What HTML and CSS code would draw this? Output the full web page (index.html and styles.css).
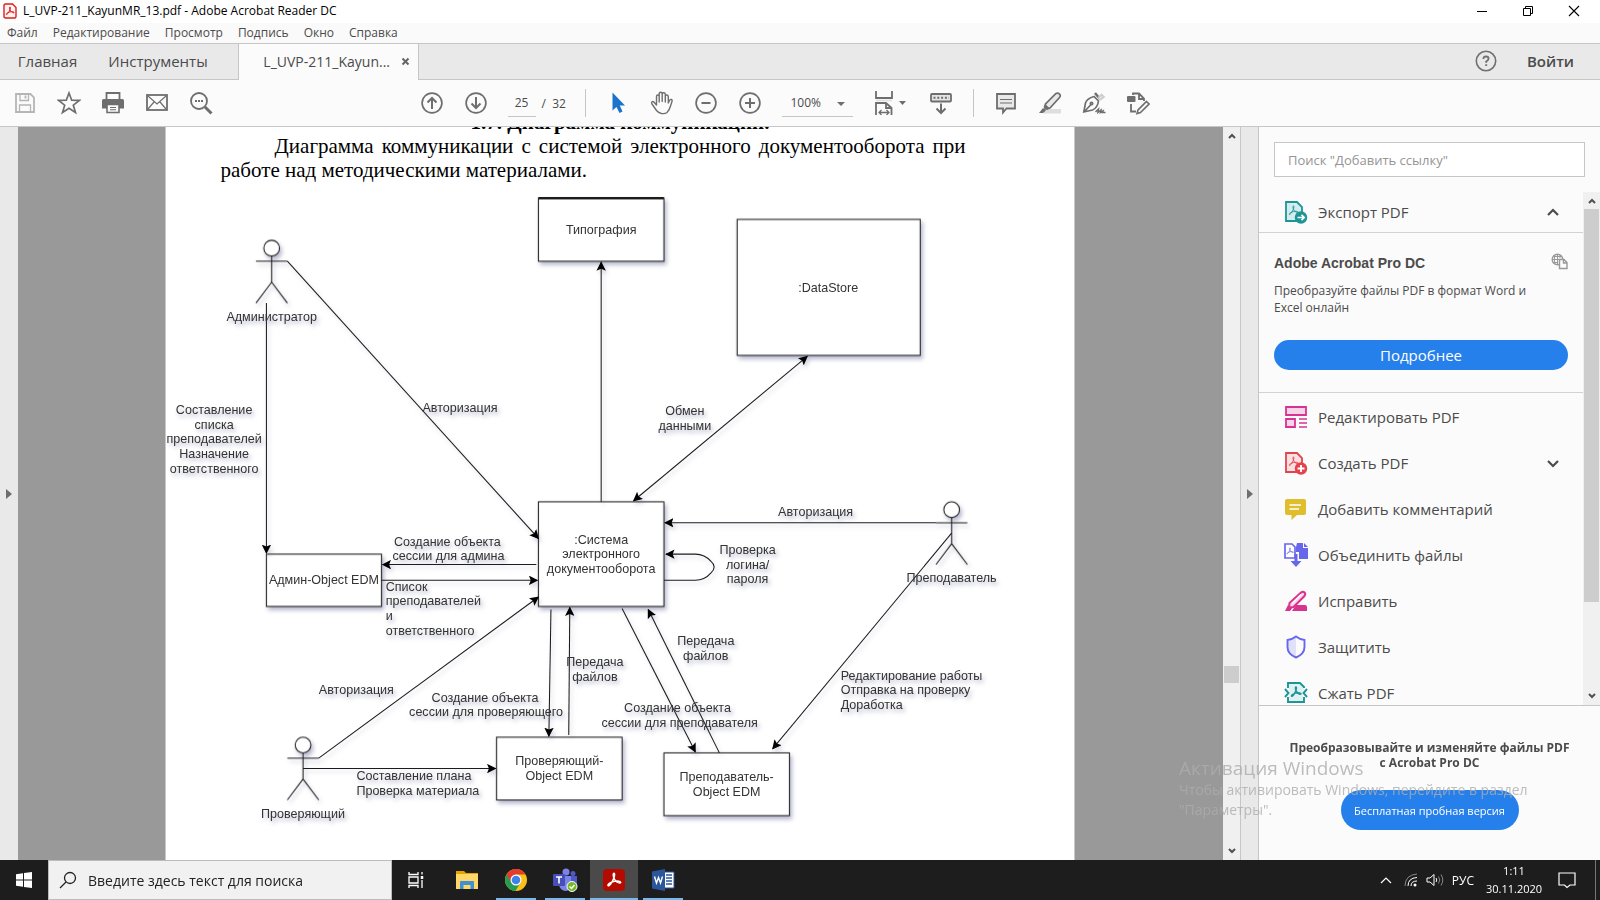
FILE: index.html
```html
<!DOCTYPE html>
<html lang="ru">
<head>
<meta charset="utf-8">
<title>L_UVP-211_KayunMR_13.pdf - Adobe Acrobat Reader DC</title>
<link rel="stylesheet" href="styles.css">
</head>
<body>
<svg class="defs" width="0" height="0" aria-hidden="true">
  <symbol id="pdf-mark" viewBox="0 0 12 12"><path d="M6 1c-.9 0-.7 2 0 3.700C7 6.600 8.500 8.300 10.300 8.300c1.200 0 .9-1.200-.7-1.400C7.200 6.600 4.500 7.300 2.700 8.300 1 9.300 1.200 10.700 2.100 10.300 3.600 9.600 6.500 4.500 6.500 2 6.500 1.400 6.300 1 6 1z"/></symbol>
</svg>

<header class="titlebar">
  <svg class="app-icon" width="14" height="16" viewBox="0 0 14 16"><path d="M2.500 1H9.500L13 4.500V13.500Q13 15 11.500 15H2.500Q1 15 1 13.500V2.500Q1 1 2.500 1z" fill="#fff4f3" stroke="#d9201c" stroke-width="1.400"/><use href="#pdf-mark" x="2" y="3" width="10" height="10" fill="none" stroke="#d9201c" stroke-width="1.200"/></svg>
  <span class="title">L_UVP-211_KayunMR_13.pdf - Adobe Acrobat Reader DC</span>
  <div class="window-buttons">
    <button aria-label="Свернуть"><svg width="12" height="12" viewBox="0 0 12 12"><path d="M1 6.500H11" stroke="#000"/></svg></button>
    <button aria-label="Восстановить"><svg width="12" height="12" viewBox="0 0 12 12"><path d="M1.500 3.500H8.500V10.500H1.500zM3.500 3.500V1.500H10.500V8.500H8.500" fill="none" stroke="#000"/></svg></button>
    <button aria-label="Закрыть"><svg width="12" height="12" viewBox="0 0 12 12"><path d="M1 1L11 11M11 1L1 11" stroke="#000" stroke-width="1.100"/></svg></button>
  </div>
</header>

<nav class="menubar">
  <button>Файл</button><button>Редактирование</button><button>Просмотр</button><button>Подпись</button><button>Окно</button><button>Справка</button>
</nav>

<div class="tabs">
  <button class="tab home">Главная</button>
  <button class="tab tools">Инструменты</button>
  <div class="tab document-tab"><span>L_UVP-211_Kayun...</span><button aria-label="Закрыть вкладку"><svg width="9" height="9" viewBox="0 0 9 9"><path d="M1.500 1.500L7.500 7.500M7.500 1.500L1.500 7.500" stroke="#666" stroke-width="2"/></svg></button></div>
  <button class="help" aria-label="Справка"><svg width="22" height="22" viewBox="0 0 22 22"><circle cx="11" cy="11" r="9.700" fill="none" stroke="#707070" stroke-width="1.600"/><path d="M8.500 9Q8.300 6.500 11 6.500T13.500 8.700Q13.500 10 11.200 11.500V12.700M11.200 14.200V16" fill="none" stroke="#707070" stroke-width="1.900"/></svg></button>
  <button class="sign-in">Войти</button>
</div>

<div class="toolbar">
  <div class="tool-group file-tools">
    <button aria-label="Сохранить"><svg width="24" height="24" viewBox="0 0 24 24" fill="none" stroke="#b5b5b5" stroke-width="1.800"><path d="M3 3H17.500L21 6.500V21H3z"/><path d="M7 3V9.500H15.500V3M6.500 21V14H17.500V21" stroke-width="1.300"/><path d="M12.500 4.500V7.500"/></svg></button>
    <button aria-label="Добавить в избранное"><svg width="24" height="24" viewBox="0 0 24 24"><path d="M12 2L14.700 9.200L22.300 9.400L16.300 14.200L18.500 21.500L12 17.300L5.500 21.500L7.700 14.200L1.700 9.400L9.300 9.200z" fill="none" stroke="#6e6e6e" stroke-width="1.700"/></svg></button>
    <button aria-label="Печать"><svg width="24" height="24" viewBox="0 0 24 24"><path d="M5.500 8V2H18.500V8" fill="#fbfbfb" stroke="#6e6e6e" stroke-width="1.800"/><path d="M2.500 8H21.500Q23 8 23 9.500V17.500H1V9.500Q1 8 2.500 8z" fill="#6e6e6e"/><path d="M6 13.500H18V21.500H6z" fill="#fbfbfb" stroke="#6e6e6e" stroke-width="1.600"/><path d="M9 16.500H15M9 18.800H15" stroke="#6e6e6e" stroke-width="1.100"/></svg></button>
    <button aria-label="Отправить по почте"><svg width="24" height="24" viewBox="0 0 24 24" fill="none" stroke="#6e6e6e"><rect x="2" y="4" width="20" height="15" stroke-width="1.800"/><path d="M3 5L12 13L21 5M3 18L9 11M21 18L15 11" stroke-width="1.200"/></svg></button>
    <button aria-label="Найти"><svg width="24" height="24" viewBox="0 0 24 24" fill="none" stroke="#6e6e6e"><circle cx="10" cy="10" r="8" stroke-width="1.800"/><path d="M16 16L22.500 22.500" stroke-width="3"/><path d="M6 10H14.500" stroke-width="2" stroke-dasharray="2 1"/></svg></button>
  </div>
  <div class="tool-group page-tools">
    <button aria-label="Предыдущая страница"><svg width="24" height="24" viewBox="0 0 24 24" fill="none" stroke="#6e6e6e"><circle cx="12" cy="12" r="9.900" stroke-width="1.700"/><path d="M12 18V7M7.500 11.500L12 7L16.500 11.500" stroke-width="2"/></svg></button>
    <button aria-label="Следующая страница"><svg width="24" height="24" viewBox="0 0 24 24" fill="none" stroke="#6e6e6e"><circle cx="12" cy="12" r="9.900" stroke-width="1.700"/><path d="M12 6V17M7.500 12.500L12 17L16.500 12.500" stroke-width="2"/></svg></button>
    <input class="page-number" type="text" value="25" aria-label="Номер страницы">
    <span class="page-total">/&nbsp; 32</span>
    <span class="divider"></span>
    <button aria-label="Выделение"><svg width="24" height="24" viewBox="0 0 24 24"><path d="M6.500 1.500V19.500L10.500 16L13.500 22L16.500 20.500L13.800 14.500H19z" fill="#1b74cc"/></svg></button>
    <button aria-label="Рука"><svg width="24" height="24" viewBox="0 0 24 24" fill="none" stroke="#6e6e6e" stroke-width="1.400" stroke-linecap="round" stroke-linejoin="round"><path d="M6.500 14V5.500Q6.500 4 7.800 4T9.200 5.500V11V3Q9.200 1.300 10.700 1.300T12.200 3V10.500V3Q12.200 1.800 13.700 1.800T15.300 3.300V11V5.500Q15.300 4 16.700 4T18.300 5.500V12L19.500 9.500Q20.200 8 21.400 8.500T22 10.500L20.500 15Q19.300 19.500 17 21.500Q15 23 11.500 22.500Q8.500 22 6.500 19.500L2 13Q1 11.500 2 10.800T4.300 11.500z"/></svg></button>
    <button aria-label="Уменьшить"><svg width="24" height="24" viewBox="0 0 24 24" fill="none" stroke="#6e6e6e"><circle cx="12" cy="12" r="9.900" stroke-width="1.700"/><path d="M7.500 12H16.500" stroke-width="2"/></svg></button>
    <button aria-label="Увеличить"><svg width="24" height="24" viewBox="0 0 24 24" fill="none" stroke="#6e6e6e"><circle cx="12" cy="12" r="9.900" stroke-width="1.700"/><path d="M7 12H17M12 7V17" stroke-width="2"/></svg></button>
    <span class="zoom-box"><select aria-label="Масштаб"><option>100%</option></select><svg width="8" height="4" viewBox="0 0 8 4"><path d="M0 0H8L4 4z" fill="#6e6e6e"/></svg></span>
    <button class="fit" aria-label="По ширине"><svg width="36" height="24" viewBox="0 0 36 24" fill="none" stroke="#6e6e6e" stroke-width="1.800"><path d="M4 0V7H20V0M4 24V12H14L19.500 17V24M14 12V17H19.500"/><path d="M4 9.500H20" stroke="#ddd" stroke-width="1.500"/><path d="M7.500 21.500H17M9.500 19L7 21.500L9.500 24M14.500 19L17 21.500L14.500 24" stroke-width="1.300"/><path d="M27 10H34L30.500 14z" fill="#6e6e6e" stroke="none"/></svg></button>
    <button aria-label="Прокрутка"><svg width="24" height="24" viewBox="0 0 24 24" fill="none" stroke="#6e6e6e" stroke-width="1.800"><rect x="2" y="3" width="20" height="7.500" rx="1" fill="#e4e4e4"/><path d="M4.500 6.700H20" stroke-width="2" stroke-dasharray="2 1.800"/><path d="M12 12.500V21.500M7.500 17.500L12 22L16.500 17.500" stroke-width="2"/></svg></button>
    <span class="divider"></span>
    <button aria-label="Комментарий"><svg width="24" height="24" viewBox="0 0 24 24"><path d="M3 3H21V17.500H12.500L9 21.500V17.500H3z" fill="#e8e8e8" stroke="#6e6e6e" stroke-width="1.800"/><path d="M6 8.500H18M6 12H18" stroke="#6e6e6e" stroke-width="1.200"/></svg></button>
    <button aria-label="Маркер"><svg width="24" height="24" viewBox="0 0 24 24"><path d="M9 18H23V22.500H5z" fill="#dedede"/><path d="M18 2.500Q20 1.500 21.500 3T21.500 6.500L12 17L7 18L7.500 13z" fill="#e8e8e8" stroke="#6e6e6e" stroke-width="1.700"/><path d="M7 13L12 17.500L9 19L5.500 16zM5 17L8 19.500L5 22H1z" fill="#6e6e6e"/></svg></button>
    <button aria-label="Подписать"><svg width="24" height="24" viewBox="0 0 24 24" fill="none" stroke="#6e6e6e" stroke-width="1.700"><path d="M13 2L18 8" stroke-width="2.500"/><path d="M16 7L19.500 3.500L22 6L18 9" fill="#ddd" stroke="#ccc"/><path d="M12 5.500Q5 7.500 3.500 12L1.800 21L10.500 19Q15.500 17 16.500 10zM2.500 20.500L9 13.500"/><circle cx="9.500" cy="12.500" r="1.200"/><path d="M13.500 21L16.500 18L16 21.500L19 19L18.500 21.500L21 20L20.500 21.500H23.500" stroke-width="1.500"/></svg></button>
    <button aria-label="Дополнительные инструменты"><svg width="24" height="24" viewBox="0 0 24 24" fill="none" stroke="#6e6e6e" stroke-width="1.800"><rect x="1" y="5" width="8.500" height="6" rx="1" fill="#6e6e6e" stroke="none"/><path d="M7 4V2.500H13L18 7.500V10M13 3V8H18M5 13V20.500H10"/><path d="M20.500 10.500L23 13L14.500 21.500L11 22.500L12 19z" fill="#fbfbfb" stroke-width="1.600"/></svg></button>
  </div>
</div>

<main class="workspace">
  <button class="side-handle" aria-label="Показать панель навигации"><svg width="6" height="10" viewBox="0 0 6 10"><path d="M0 0L6 5L0 10z" fill="#6e6e6e"/></svg></button>
  <section class="viewport">
    <article class="sheet">
      <div class="sheet-text">
        <div class="cut-line"><h2>1.7. Диаграмма коммуникации.</h2></div>
        <p>Диаграмма коммуникации с системой электронного документооборота при работе над методическими материалами.</p>
      </div>
      <svg class="diagram" viewBox="4 0 868 643" role="img" aria-label="Диаграмма коммуникации">
        <defs>
          <marker id="arrow" viewBox="0 0 10 10" refX="9" refY="5" markerWidth="9" markerHeight="9" markerUnits="userSpaceOnUse" orient="auto-start-reverse"><path d="M0 0L10 5L0 10L2 5z"/></marker>
          <symbol id="actor" viewBox="-2 -2 36 66"><circle cx="15" cy="7.500" r="7.500" fill="#fff"/><path d="M15 15V40M0 20H30M15 40L0 60M15 40L30 60" fill="none"/></symbol>
        </defs>
        <g class="shapes">
          <rect x="360" y="10" width="120" height="60"/><path d="M360 10H480" stroke-width="2"/>
          <rect x="550" y="30" width="175" height="130"/>
          <rect x="360" y="300" width="120" height="100"/>
          <rect x="100" y="350" width="110" height="50"/>
          <rect x="320" y="525" width="120" height="60"/>
          <rect x="480" y="540" width="120" height="60"/>
          <use href="#actor" x="88" y="48" width="36" height="66"/>
          <use href="#actor" x="738" y="298" width="36" height="66"/>
          <use href="#actor" x="118" y="523" width="36" height="66"/>
        </g>
        <g class="links">
          <path d="M100 110V349" marker-end="url(#arrow)"/>
          <path d="M120 70L360 335" marker-end="url(#arrow)"/>
          <path d="M420 300V71" marker-end="url(#arrow)"/>
          <path d="M451 299L617 161" marker-start="url(#arrow)" marker-end="url(#arrow)"/>
          <path d="M740 320H481" marker-end="url(#arrow)"/>
          <path d="M755 330L584 536" marker-end="url(#arrow)"/>
          <path d="M480 375H510Q519 375 525 368Q531 362 525 357Q519 350 510 350H482" marker-end="url(#arrow)"/>
          <path d="M358 360H211" marker-end="url(#arrow)"/>
          <path d="M210 375H359" marker-end="url(#arrow)"/>
          <path d="M150 545L360 391" marker-end="url(#arrow)"/>
          <path d="M135 555H319" marker-end="url(#arrow)"/>
          <path d="M372 403L370 524" marker-end="url(#arrow)"/>
          <path d="M389 523L390 401" marker-end="url(#arrow)"/>
          <path d="M440 402L510 539" marker-end="url(#arrow)"/>
          <path d="M533 540L465 403" marker-end="url(#arrow)"/>
        </g>
        <g class="box-text">
          <text x="420" y="44">Типография</text>
          <text x="637" y="99">:DataStore</text>
          <text x="420" y="340">:Система<tspan x="420" dy="14">электронного</tspan><tspan x="420" dy="14">документооборота</tspan></text>
          <text x="155" y="379">Админ-Object EDM</text>
          <text x="380" y="552">Проверяющий-<tspan x="380" dy="14">Object EDM</tspan></text>
          <text x="540" y="567">Преподаватель-<tspan x="540" dy="14">Object EDM</tspan></text>
        </g>
        <g class="labels">
          <text x="105" y="127">Администратор</text>
          <text x="755" y="377">Преподаватель</text>
          <text x="135" y="602">Проверяющий</text>
          <text x="50" y="216">Составление<tspan x="50" dy="14">списка</tspan><tspan x="50" dy="14">преподавателей</tspan><tspan x="50" dy="14">Назначение</tspan><tspan x="50" dy="14">ответственного</tspan></text>
          <text x="285" y="214">Авторизация</text>
          <text x="500" y="217">Обмен<tspan x="500" dy="14">данными</tspan></text>
          <text x="625" y="314">Авторизация</text>
          <text x="560" y="350">Проверка<tspan x="560" dy="14">логина/</tspan><tspan x="560" dy="14">пароля</tspan></text>
          <text x="273" y="342">Создание объекта<tspan x="274" dy="14">сессии для админа</tspan></text>
          <text class="left" x="214" y="385">Список<tspan x="214" dy="14">преподавателей</tspan><tspan x="214" dy="14">и</tspan><tspan x="214" dy="14">ответственного</tspan></text>
          <text x="186" y="484">Авторизация</text>
          <text x="309" y="491">Создание объекта<tspan x="310" dy="14">сессии для проверяющего</tspan></text>
          <text x="414" y="457">Передача<tspan x="414" dy="14">файлов</tspan></text>
          <text x="520" y="437">Передача<tspan x="520" dy="14">файлов</tspan></text>
          <text class="left" x="186" y="566">Составление плана<tspan x="186" dy="14">Проверка материала</tspan></text>
          <text x="493" y="501">Создание объекта<tspan x="495" dy="14">сессии для преподавателя</tspan></text>
          <text class="left" x="649" y="470">Редактирование работы<tspan x="649" dy="14">Отправка на проверку</tspan><tspan x="649" dy="14">Доработка</tspan></text>
        </g>
      </svg>
    </article>
  </section>
  <div class="scrollbar doc-scroll">
    <svg width="8" height="6" viewBox="0 0 8 6"><path d="M1 5L4 2L7 5" fill="none" stroke="#505050" stroke-width="2"/></svg>
    <div class="track"><span class="thumb"></span></div>
    <svg width="8" height="6" viewBox="0 0 8 6"><path d="M1 1L4 4L7 1" fill="none" stroke="#505050" stroke-width="2"/></svg>
  </div>
  <button class="side-handle right" aria-label="Скрыть панель инструментов"><svg width="6" height="10" viewBox="0 0 6 10"><path d="M0 0L6 5L0 10z" fill="#6e6e6e"/></svg></button>

  <aside class="panel">
    <input class="panel-search" type="search" placeholder="Поиск &quot;Добавить ссылку&quot;" aria-label="Поиск инструментов">
    <div class="panel-body">
      <div class="panel-list">
        <button class="tool-row export"><svg class="tool-icon" width="24" height="24" viewBox="0 0 24 24"><path d="M2 2H13L18 7V21H2z" fill="#d3eced" stroke="#1d9597" stroke-width="1.800"/><use href="#pdf-mark" x="4" y="5" width="11" height="11" fill="none" stroke="#1d9597"/><circle cx="17" cy="17.500" r="6.200" fill="#1d9597"/><path d="M13.500 17.500H20M17.500 14.800L20.200 17.500L17.500 20.200" fill="none" stroke="#fff" stroke-width="1.700"/></svg><span>Экспорт PDF</span><svg class="chevron" width="14" height="9" viewBox="0 0 14 9"><path d="M2 7L7 2L12 7" fill="none" stroke="#4b4b4b" stroke-width="2.200"/></svg></button>
        <div class="offer">
          <div class="offer-head"><h3>Adobe Acrobat Pro DC</h3><svg width="17" height="17" viewBox="0 0 17 17" fill="none" stroke="#999"><circle cx="6.500" cy="6.500" r="5.300" stroke-width="1.400"/><path d="M1 6.500H9M6.500 1V12M2 3.500H11M2 9.500H7M4 2Q2.500 6 4 11M9 2V5"/><path d="M8.500 6.500H13L16 9.500V15.500H8.500zM12.500 6.500V10H16" fill="#fbfbfb" stroke-width="1.400"/></svg></div>
          <p>Преобразуйте файлы PDF в формат Word и Excel онлайн</p>
          <button class="more">Подробнее</button>
        </div>
        <button class="tool-row"><svg class="tool-icon" width="24" height="24" viewBox="0 0 24 24" fill="#f7d4e7" stroke="#d8348f" stroke-width="1.800"><path d="M2 2H22V10H2zM2 14H11V22H2z"/><path d="M15 14H23M15 18H23M15 22H23" stroke-width="1.300"/></svg><span>Редактировать PDF</span></button>
        <button class="tool-row"><svg class="tool-icon" width="24" height="24" viewBox="0 0 24 24"><path d="M2 2H13L18 7V21H2z" fill="#fae0e0" stroke="#e2444d" stroke-width="1.800"/><use href="#pdf-mark" x="4" y="5" width="11" height="11" fill="none" stroke="#e2444d"/><circle cx="17" cy="17.500" r="6.200" fill="#e2444d"/><path d="M13.500 17.500H20.500M17 14V21" stroke="#fff" stroke-width="1.900"/></svg><span>Создать PDF</span><svg class="chevron" width="14" height="9" viewBox="0 0 14 9"><path d="M2 2L7 7L12 2" fill="none" stroke="#4b4b4b" stroke-width="2.200"/></svg></button>
        <button class="tool-row"><svg class="tool-icon" width="24" height="24" viewBox="0 0 24 24"><path d="M3 2H20Q22 2 22 4V16Q22 18 20 18H13L7.500 23V18H3Q1 18 1 16V4Q1 2 3 2z" fill="#dfbd2c"/><path d="M5.500 8H17M5.500 12H15" stroke="#fff" stroke-width="1.400"/></svg><span>Добавить комментарий</span></button>
        <button class="tool-row"><svg class="tool-icon" width="24" height="24" viewBox="0 0 24 24"><path d="M1 1H8L11 4V15H1z" fill="#fff" stroke="#6767ec" stroke-width="1.700"/><use href="#pdf-mark" x="2" y="4" width="8" height="8" fill="none" stroke="#6767ec"/><path d="M13 0H19V5H24V16H15V9H12V4zM20 0L24 4H20zM10.500 11H13.500V18H17.500L12 24L6.500 18H10.500z" fill="#6767ec"/></svg><span>Объединить файлы</span></button>
        <button class="tool-row"><svg class="tool-icon" width="24" height="24" viewBox="0 0 24 24"><path d="M12 16H21Q23 16 23 18V22H8z" fill="#d8348f"/><path d="M17 3.500Q19 2 20.500 3.500T20.500 7L9.500 18L5 18.500L5.500 14z" fill="#f7d4e7" stroke="#d8348f" stroke-width="2"/><path d="M8 14.500L17 5.500" stroke="#fff" stroke-width="1.300"/><path d="M4 16L8 19.500L6 22H1z" fill="#d8348f"/></svg><span>Исправить</span></button>
        <button class="tool-row"><svg class="tool-icon" width="24" height="24" viewBox="0 0 24 24"><path d="M12 1.500V22.500Q3.500 18.500 3.500 12V5Q8 4.500 12 1.500z" fill="#e0e0fa"/><path d="M12 1.500Q16 4.500 20.500 5V12Q20.500 19 12 22.500Q3.500 19 3.500 12V5Q8 4.500 12 1.500z" fill="none" stroke="#6767ec" stroke-width="1.900"/></svg><span>Защитить</span></button>
        <button class="tool-row"><svg class="tool-icon" width="24" height="24" viewBox="0 0 24 24" fill="none" stroke="#1d9597" stroke-width="1.900"><path d="M4 3H16L20 7L18 12L20 17V20H4L6 12z" fill="#dff1f1" stroke="none"/><path d="M4 7V2H16L20 6V7M4 16V21H20V16"/><path d="M1 8L4.500 12L1 16M23 8L19.500 12L23 16"/><use href="#pdf-mark" x="6" y="5" width="12" height="12" stroke-width="1.400"/></svg><span>Сжать PDF</span></button>
      </div>
      <div class="scrollbar panel-scroll">
        <svg width="8" height="6" viewBox="0 0 8 6"><path d="M1 5L4 2L7 5" fill="none" stroke="#505050" stroke-width="2"/></svg>
        <div class="track"><span class="thumb"></span></div>
        <svg width="8" height="6" viewBox="0 0 8 6"><path d="M1 1L4 4L7 1" fill="none" stroke="#505050" stroke-width="2"/></svg>
      </div>
    </div>
    <div class="promo">
      <p>Преобразовывайте и изменяйте файлы PDF с&nbsp;Acrobat Pro DC</p>
      <button>Бесплатная пробная версия</button>
    </div>
  </aside>
</main>

<footer class="taskbar">
  <button class="start" aria-label="Пуск"><svg width="16" height="16" viewBox="0 0 16 16"><path d="M0 2.200L7 1.200V7.500H0zM8 1L16 0V7.500H8zM0 8.500H7V14.800L0 13.800zM8 8.500H16V16L8 15z" fill="#fff"/></svg></button>
  <label class="task-search"><svg width="18" height="18" viewBox="0 0 18 18" fill="none" stroke="#222" stroke-width="1.300"><circle cx="11" cy="7" r="5.500"/><path d="M7 11L1 17"/></svg><input type="text" placeholder="Введите здесь текст для поиска" aria-label="Поиск в Windows"></label>
  <div class="apps">
    <button class="task-view" aria-label="Представление задач"><svg width="18" height="18" viewBox="0 0 18 18" fill="none" stroke="#fff" stroke-width="1.300"><path d="M2 1V3.500H11V1M2 17V14.500H11V17M2 6H11V12H2zM15 1V3.500M15 9V17"/><path d="M15 5V8" stroke-width="2.500"/></svg></button>
    <button aria-label="Проводник"><svg width="24" height="20" viewBox="0 0 24 20"><path d="M1 1H9L11 3H23V19H1z" fill="#e5a300"/><path d="M1 4H23V19H1z" fill="#ffd667"/><path d="M5 18V12Q5 11 6 11H18Q19 11 19 12V19H15.500V15H8.500V19H5z" fill="#3d92d6"/></svg></button>
    <button class="running" aria-label="Google Chrome"><svg width="24" height="24" viewBox="0 0 24 24"><circle cx="12" cy="12" r="11" fill="#fbc116"/><path d="M2.500 6.500A11 11 0 0 0 11.500 23L16.500 14.500L12 12z" fill="#269c4e"/><path d="M12 6.500H21.500A11 11 0 0 0 2.500 6.500L7.300 14.500z" fill="#e33b2e"/><circle cx="12" cy="12" r="5.500" fill="#fff"/><circle cx="12" cy="12" r="4.300" fill="#3e82ee"/></svg></button>
    <button class="running" aria-label="Microsoft Teams"><svg width="26" height="24" viewBox="0 0 26 24"><circle cx="14" cy="4" r="3.500" fill="#7b83eb"/><circle cx="21" cy="5.500" r="2.500" fill="#5059c9"/><path d="M15 8H25V16Q24 20 19 20z" fill="#5059c9"/><path d="M7 8H19V17Q18 23 13 23Q8 22 7 17z" fill="#7b83eb"/><rect x="1" y="6" width="12" height="12" rx="1" fill="#464eb8"/><path d="M4 9H10M7 9V15.500" stroke="#fff" stroke-width="1.600"/><circle cx="20" cy="18.500" r="5" fill="#76b82a" stroke="#fff"/><path d="M17.500 18.500L19.500 20.500L22.500 17" fill="none" stroke="#fff" stroke-width="1.500"/></svg></button>
    <button class="running active" aria-label="Adobe Acrobat"><svg width="22" height="22" viewBox="0 0 22 22"><rect width="22" height="22" rx="4" fill="#b30b00"/><use href="#pdf-mark" x="3" y="3" width="16" height="16" fill="none" stroke="#fff" stroke-width="1.100"/></svg></button>
    <button class="running" aria-label="Microsoft Word"><svg width="24" height="22" viewBox="0 0 24 22"><path d="M13 3H23V19H13z" fill="#fff" stroke="#2b579a"/><path d="M15 6H21M15 9H21M15 12H21M15 15H21" stroke="#2b579a" stroke-width="1.300"/><path d="M1 2.500L14 0V22L1 19.500z" fill="#2b579a"/><path d="M3.500 7.500L5.500 14L7.500 8.500L9.500 14L11.500 7.500" fill="none" stroke="#fff" stroke-width="1.400"/></svg></button>
  </div>
  <div class="tray">
    <button class="expand" aria-label="Скрытые значки"><svg width="12" height="8" viewBox="0 0 12 8"><path d="M1 7L6 2L11 7" fill="none" stroke="#fff" stroke-width="1.200"/></svg></button>
    <svg width="14" height="14" viewBox="0 0 14 14" fill="none" stroke="#fff"><path d="M1 13Q1 2 13 1" stroke="#888"/><path d="M4 13Q4 5 13 4.500M7 13Q7 8 13 8"/><circle cx="11" cy="12" r="1.500" fill="#fff" stroke="none"/></svg>
    <svg width="18" height="14" viewBox="0 0 18 14" fill="none" stroke="#fff"><path d="M1 5H4L8 1.500V12.500L4 9H1z"/><path d="M10 5Q11.500 7 10 9"/><path d="M12.500 3.500Q15 7 12.500 10.500M15 1.500Q18.500 7 15 12.500" stroke="#888"/></svg>
    <span class="language">РУС</span>
    <time><span>1:11</span><span>30.11.2020</span></time>
    <button class="notifications" aria-label="Уведомления"><svg width="18" height="17" viewBox="0 0 18 17"><path d="M1 1H17V13H12L9 15.500L6.500 13H1z" fill="none" stroke="#fff" stroke-width="1.200"/></svg></button>
  </div>
</footer>

<div class="activation">
  <strong>Активация Windows</strong>
  <span>Чтобы активировать Windows, перейдите в раздел</span>
  <span>"Параметры".</span>
</div>
</body>
</html>
```
FILE: styles.css
```css
* { box-sizing: border-box; }
html, body { height: 100%; }
body {
  margin: 0;
  display: flex;
  flex-direction: column;
  overflow: hidden;
  background: #fbfbfb;
  color: #4b4b4b;
  font: 12px "Open Sans", "Noto Sans", sans-serif;
}
button, input, select { font: inherit; color: inherit; border: 0; background: none; padding: 0; margin: 0; }
button { display: flex; align-items: center; justify-content: center; white-space: nowrap; }
h2, h3, p { margin: 0; }
svg { flex: none; display: block; }
.defs { position: absolute; }

.titlebar { flex: none; display: flex; align-items: center; height: 23px; padding: 0 0 2px 3px; background: #fff; color: #000; }
.title { margin-left: 6px; }
.window-buttons { display: flex; margin-left: auto; padding-right: 3px; }
.window-buttons button { width: 46px; height: 20px; }

.menubar { flex: none; display: flex; align-items: center; gap: 15px; height: 21px; padding: 0 0 1px 7px; border-bottom: 1px solid #c6c6c6; background: #fafafa; }

.tabs { flex: none; display: flex; align-items: stretch; height: 36px; background: #e9e9e9; font-size: 15px; box-shadow: inset 0 -1px #c6c6c6; }
.tab { display: flex; align-items: center; }
.tabs > * { padding-bottom: 2px; }
.home { width: 93px; padding-left: 2px; }
.tools { width: 130px; }
.document-tab { width: 181px; margin-left: 15px; padding-right: 8px; justify-content: flex-end; gap: 11px; background: #fbfbfb; border: solid #c6c6c6; border-width: 0 1px; font-size: 14px; }
.help { margin-left: auto; width: 22px; }
.sign-in { padding-right: 26px; padding-left: 30px; font-weight: 600; }

.toolbar { flex: none; display: grid; grid-template-columns: 1fr auto 1fr; align-items: center; height: 47px; padding: 0 34px 0 3px; border-bottom: 1px solid #c6c6c6; }
.tool-group { display: flex; align-items: center; }
.page-tools { grid-column: 2; }
.tool-group button { width: 44px; height: 28px; }
.page-number { width: 28px; height: 27px; margin-left: 10px; text-align: center; border-bottom: 1px solid #c6c6c6; }
.page-total { width: 39px; padding-left: 6px; white-space: nowrap; }
.divider { width: 1px; height: 28px; margin: 0 10px; background: #c6c6c6; }
.zoom-box { position: relative; width: 71px; height: 27px; margin: 0 8px 0 10px; border-bottom: 1px solid #c6c6c6; }
.zoom-box select { appearance: none; width: 100%; height: 100%; padding-left: 9px; }
.zoom-box svg { position: absolute; right: 8px; top: 12px; pointer-events: none; }
.tool-group .fit { width: 58px; }

.workspace { flex: 1; min-height: 0; display: flex; }
.side-handle { flex: none; width: 18px; background: #e9e9e9; }
.side-handle.right { width: 19px; border: solid #c6c6c6; border-width: 0 1px; }
.viewport { flex: 1; min-width: 0; overflow: hidden; background: #999; padding: 0 2px 0 0; }
.sheet { max-width: 910px; min-height: 100%; margin: 0 auto; background: #fff; border: solid #c8c8c8; border-width: 0 1px; }
.sheet-text { padding: 0 108px 0 55px; color: #000; font-family: "Liberation Serif", serif; font-size: 21px; line-height: 24px; }
.cut-line { display: flex; align-items: flex-end; justify-content: center; height: 7px; overflow: hidden; padding-left: 54px; }
.cut-line h2 { font-size: 21px; line-height: 24px; }
.sheet-text p { text-indent: 54px; text-align: justify; }
.diagram { width: 100%; margin-top: 6px; font-family: "Liberation Sans", Arial, sans-serif; font-size: 12px; }
.diagram text { fill: #333; text-anchor: middle; }
.diagram .left { text-anchor: start; }
.shapes { fill: #fff; stroke: #1c1c1c; filter: drop-shadow(2px 3px 2px rgba(70, 75, 130, .4)); }
.links { fill: none; stroke: #1c1c1c; filter: drop-shadow(2px 3px 2px rgba(70, 75, 130, .25)); }
.diagram marker path { fill: #000; stroke: none; }
.labels { filter: drop-shadow(2px 3px 2px rgba(70, 75, 130, .4)); }

.scrollbar { flex: none; display: flex; flex-direction: column; align-items: center; width: 17px; padding: 6px 0; background: #f0f0f0; }
.scrollbar .track { flex: 1; width: 100%; }
.thumb { display: block; width: 15px; margin: 0 auto; background: #cdcdcd; }
.doc-scroll .track { padding-top: 527px; }
.doc-scroll .thumb { height: 17px; }
.panel-scroll .track { padding-top: 5px; }
.panel-scroll .thumb { height: 393px; }

.panel { flex: none; width: 341px; display: flex; flex-direction: column; background: #fbfbfb; }
.panel-search { flex: none; height: 35px; margin: 15px; padding: 0 13px; background: #fff; border: 1px solid #c6c6c6; font-size: 13px; }
.panel-search::placeholder { color: #959595; }
.panel-body { flex: 1; min-height: 0; display: flex; border-bottom: 1px solid #c6c6c6; }
.panel-list { flex: 1; overflow: hidden; }
.tool-row { width: 100%; height: 46px; padding: 0 23px 0 25px; justify-content: flex-start; gap: 10px; font-size: 15px; }
.tool-row .chevron { margin-left: auto; }
.tool-row.export { height: 41px; border-bottom: 1px solid #d2d2d2; }
.offer { margin-bottom: 1px; padding: 20px 15px 22px; border-bottom: 1px solid #d2d2d2; }
.offer-head { display: flex; justify-content: space-between; }
.offer h3 { font: bold 14px/20px "Liberation Sans", Arial, sans-serif; }
.offer p { margin: 9px 0 24px; padding-right: 26px; line-height: 17px; font-size: 12px; }
.more { width: 100%; height: 30px; border-radius: 15px; background: #2680eb; color: #fff; font-size: 15px; }
.promo { flex: none; display: flex; flex-direction: column; align-items: center; height: 154px; padding: 34px 24px 0; }
.promo p { font-size: 12px; font-weight: 700; line-height: 15px; text-align: center; }
.promo button { width: 178px; height: 40px; margin-top: 20px; border-radius: 20px; background: #2680eb; color: #fff; font-size: 11px; }

.taskbar { flex: none; display: flex; height: 40px; background: #1d1d1d; color: #fff; }
.start { width: 48px; }
.task-search { display: flex; align-items: center; gap: 11px; width: 344px; padding-left: 10px; background: #f1f1f1; border: 1px solid #bbb; color: #222; font-size: 14px; }
.task-search input { flex: 1; }
.task-search input::placeholder { color: #222; }
.apps { display: flex; gap: 1px; }
.apps button { width: 48px; }
.apps .task-view { margin-right: 2px; }
.running { background: linear-gradient(#76b9ed, #76b9ed) center bottom / 40px 2px no-repeat; }
.apps .active { background-color: #4a4a4a; background-size: 100% 2px; }
.tray { display: flex; align-items: center; gap: 8px; margin-left: auto; padding-right: 4px; }
.expand { margin-right: 4px; }
.language { margin-right: 3px; }
.tray time { display: flex; flex-direction: column; align-items: center; width: 58px; font-size: 11px; line-height: 18px; }
.notifications { width: 45px; height: 40px; padding-left: 7px; justify-content: flex-start; border-right: 1px solid #777; }

.activation { position: absolute; right: 67px; bottom: 80px; width: 354px; display: flex; flex-direction: column; color: rgba(172, 172, 172, .8); font-size: 14px; line-height: 20px; white-space: nowrap; pointer-events: none; }
.activation strong { font-size: 19px; font-weight: 400; line-height: 24px; }
```
